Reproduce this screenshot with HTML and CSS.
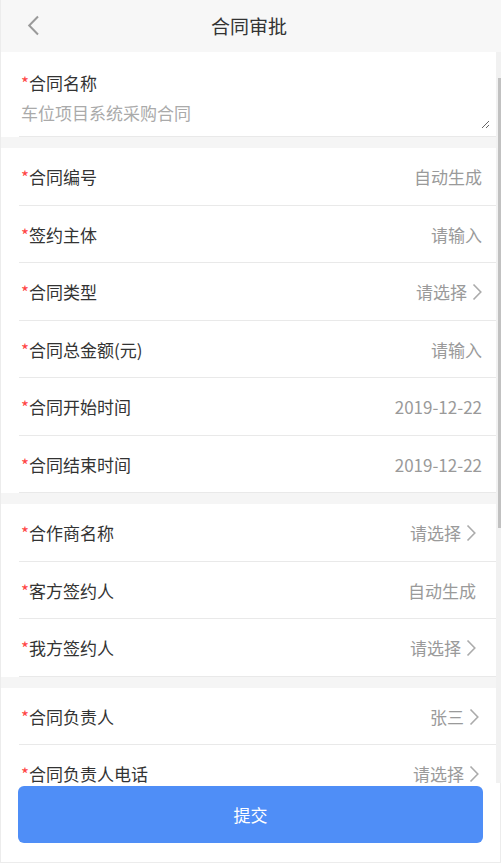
FILE: index.html
```html
<!DOCTYPE html>
<html lang="zh-CN">
<head>
<meta charset="utf-8">
<title>合同审批</title>
<link rel="stylesheet" href="styles.css">
</head>
<body>
<div class="app">
  <header class="nav">
    <span class="nav-back">
      <svg width="13" height="21" viewBox="0 0 13 21"><polyline points="11,1.5 2.2,10.5 11,19.5" fill="none" stroke="#9a9a9a" stroke-width="2"/></svg>
    </span>
    <h1 class="nav-title">合同审批</h1>
    <span></span>
  </header>
  <div class="body-area">
    <main class="content">
      <section class="card">
        <div class="name-field">
          <label class="label"><span class="req">*</span>合同名称</label>
          <textarea class="name-input" placeholder="车位项目系统采购合同"></textarea>
        </div>
      </section>
      <section class="card card-a">
        <div class="row"><span class="label"><span class="req">*</span>合同编号</span><span class="value">自动生成</span></div>
        <div class="row"><span class="label"><span class="req">*</span>签约主体</span><span class="value">请输入</span></div>
        <div class="row"><span class="label"><span class="req">*</span>合同类型</span><span class="value">请选择<svg class="chev" width="10" height="18" viewBox="0 0 10 18"><polyline points="1.5,1.5 8.8,9 1.5,16.5" fill="none" stroke="#ababab" stroke-width="1.6"/></svg></span></div>
        <div class="row"><span class="label"><span class="req">*</span>合同总金额(元)</span><span class="value">请输入</span></div>
        <div class="row"><span class="label"><span class="req">*</span>合同开始时间</span><span class="value">2019-12-22</span></div>
        <div class="row"><span class="label"><span class="req">*</span>合同结束时间</span><span class="value">2019-12-22</span></div>
      </section>
      <section class="card card-b">
        <div class="row"><span class="label"><span class="req">*</span>合作商名称</span><span class="value">请选择<svg class="chev" width="10" height="18" viewBox="0 0 10 18"><polyline points="1.5,1.5 8.8,9 1.5,16.5" fill="none" stroke="#ababab" stroke-width="1.6"/></svg></span></div>
        <div class="row"><span class="label"><span class="req">*</span>客方签约人</span><span class="value">自动生成</span></div>
        <div class="row"><span class="label"><span class="req">*</span>我方签约人</span><span class="value">请选择<svg class="chev" width="10" height="18" viewBox="0 0 10 18"><polyline points="1.5,1.5 8.8,9 1.5,16.5" fill="none" stroke="#ababab" stroke-width="1.6"/></svg></span></div>
      </section>
      <section class="card card-c">
        <div class="row"><span class="label"><span class="req">*</span>合同负责人</span><span class="value">张三<svg class="chev" width="10" height="18" viewBox="0 0 10 18"><polyline points="1.5,1.5 8.8,9 1.5,16.5" fill="none" stroke="#ababab" stroke-width="1.6"/></svg></span></div>
        <div class="row"><span class="label"><span class="req">*</span>合同负责人电话</span><span class="value">请选择<svg class="chev" width="10" height="18" viewBox="0 0 10 18"><polyline points="1.5,1.5 8.8,9 1.5,16.5" fill="none" stroke="#ababab" stroke-width="1.6"/></svg></span></div>
      </section>
    </main>
    <div class="scrollbar" aria-hidden="true"><div class="scrollbar-thumb"></div></div>
  </div>
  <footer class="footer">
    <button class="submit" type="button">提交</button>
  </footer>
</div>
</body>
</html>
```
FILE: styles.css
```css
html, body {
  margin: 0;
  height: 100%;
}
body {
  background: #ececec;
  font-family: "Noto Sans CJK SC", "Microsoft YaHei", sans-serif;
  color: #333;
}
.app {
  height: 100vh;
  display: flex;
  flex-direction: column;
  background: #f5f5f5;
  border-left: 1px solid #ececec;
  box-sizing: border-box;
}
.nav {
  height: 52px;
  flex: none;
  display: grid;
  grid-template-columns: 1fr auto 1fr;
  align-items: center;
  background: #f7f7f7;
}
.nav-back {
  display: flex;
  padding-left: 26px;
  padding-bottom: 1px;
}
.nav-title {
  margin: 0;
  font-size: 19px;
  font-weight: 400;
  color: #333;
  line-height: 26px;
  padding-right: 4px;
}
.body-area {
  flex: 1;
  min-height: 0;
  display: flex;
}
.content {
  flex: 1;
  min-width: 0;
  overflow: hidden;
}
.scrollbar {
  flex: none;
  width: 5px;
  background: #f1f1f1;
  display: flex;
  justify-content: flex-end;
}
.scrollbar-thumb {
  width: 3px;
  height: 450px;
  margin-top: 26px;
  background: #c1c1c1;
}
.card {
  background: #fff;
}
.card + .card {
  margin-top: 11px;
}
.name-field {
  margin-left: 18px;
  padding: 19px 6px 7px 2px;
  border-bottom: 1px solid #e9e9e9;
  display: flex;
  flex-direction: column;
}
.label {
  font-size: 17px;
  line-height: 24px;
  color: #333;
}
.req {
  color: #f44;
}
.name-input {
  margin-top: 6px;
  height: 28px;
  border: none;
  padding: 0;
  font-family: inherit;
  font-size: 17px;
  line-height: 24px;
  color: #333;
  background: transparent;
  outline: none;
  resize: vertical;
}
.name-input::placeholder {
  color: #aaa;
}
.row {
  height: 57.5px;
  box-sizing: border-box;
  margin-left: 18px;
  padding: 2px 14px 0 2px;
  border-bottom: 1px solid #e9e9e9;
  display: flex;
  align-items: center;
  justify-content: space-between;
}
.card-b .row {
  padding-right: 20px;
}
.card-c .row {
  padding-right: 17px;
}
.value {
  display: flex;
  align-items: center;
  gap: 5px;
  font-size: 17px;
  line-height: 24px;
  color: #9a9a9a;
}
.chev {
  display: block;
}
.footer {
  flex: none;
  background: #fff;
  padding: 3px 17px 19px 17px;
  border-right: 1px solid #ececec;
  border-bottom: 1px solid #ececec;
}
.submit {
  display: block;
  width: 100%;
  height: 57px;
  border: none;
  border-radius: 6px;
  background: #4f8ef7;
  color: #fff;
  font-family: inherit;
  font-size: 17px;
  cursor: pointer;
}
```
